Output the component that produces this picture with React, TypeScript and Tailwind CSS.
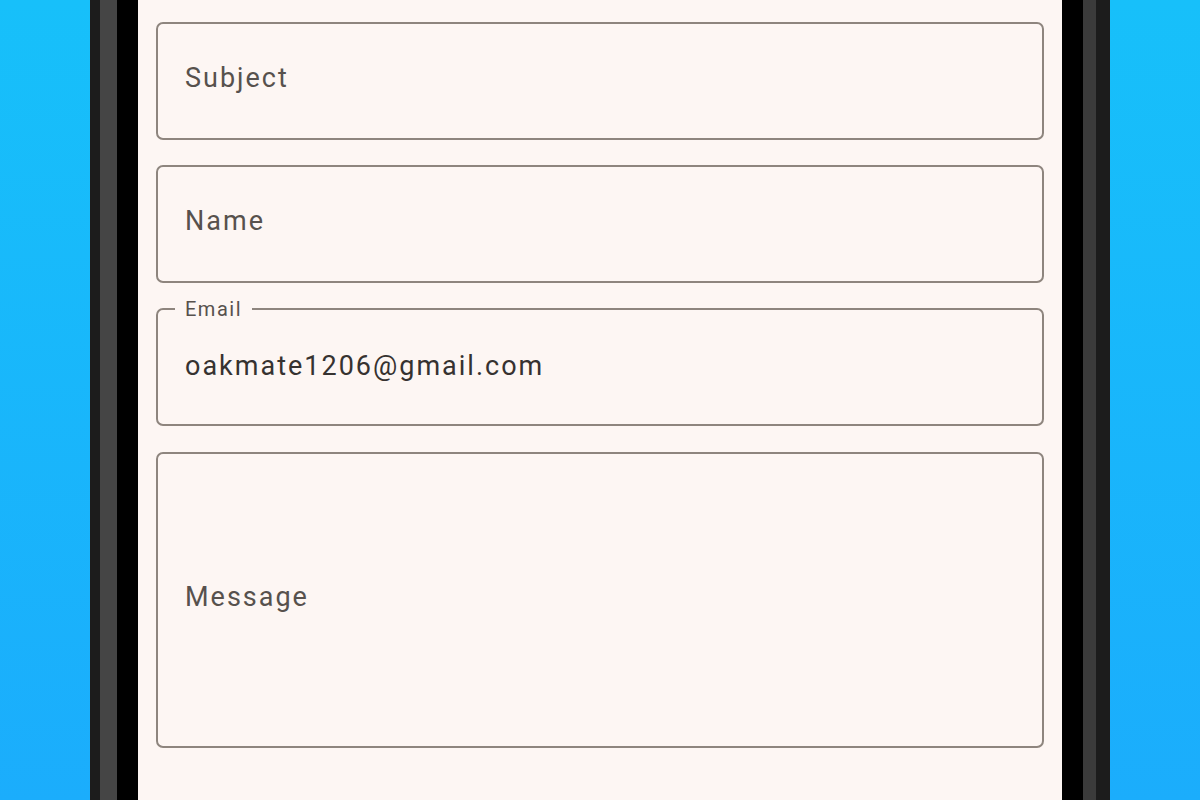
import React from "react";

const font = { fontFamily: "Roboto, 'Noto Sans', sans-serif" };

const fields = [
  { label: "Subject", height: "h-[118px]" },
  { label: "Name", height: "h-[118px]" },
];

const App = () => {
  return (
    <div
      className="flex h-[800px] w-[1200px] overflow-hidden bg-gradient-to-b from-[#17c0fa] to-[#1badfc]"
      style={font}
    >
      <div className="w-[90px] shrink-0" />
      {/* left bezel */}
      <div className="w-[10px] shrink-0 bg-[#1c1c1c]" />
      <div className="w-[17px] shrink-0 bg-[#454545]" />
      <div className="w-[21px] shrink-0 bg-black" />

      {/* screen */}
      <div className="flex flex-1 flex-col bg-[#fdf6f3] px-[18px] pt-[22px]">
        <div className="flex flex-col gap-[25px]">
          {fields.map((f) => (
            <div
              key={f.label}
              className={`flex ${f.height} items-center rounded-[7px] border-2 border-[#8e857e] pb-[6px] pl-[27px] text-[27px] tracking-[2px] text-[#57514d]`}
            >
              {f.label}
            </div>
          ))}
        </div>

        <fieldset className="mt-[15px] h-[128px] rounded-[7px] border-2 border-[#8e857e] px-0 pb-0">
          <legend className="ml-[17px] px-[10px] text-[20px] leading-[22px] tracking-[1.5px] text-[#57514d]">
            Email
          </legend>
          <div className="flex h-[92px] items-center pl-[27px] text-[27px] tracking-[2px] text-[#363230]">
            oakmate1206@gmail.com
          </div>
        </fieldset>

        <div className="mt-[26px] flex h-[296px] items-center rounded-[7px] border-2 border-[#8e857e] pb-[6px] pl-[27px] text-[27px] tracking-[2px] text-[#57514d]">
          Message
        </div>
      </div>

      {/* right bezel */}
      <div className="w-[21px] shrink-0 bg-black" />
      <div className="w-[13px] shrink-0 bg-[#3b3b3b]" />
      <div className="w-[14px] shrink-0 bg-[#1c1c1c]" />
      <div className="w-[90px] shrink-0" />
    </div>
  );
};

export default App;
